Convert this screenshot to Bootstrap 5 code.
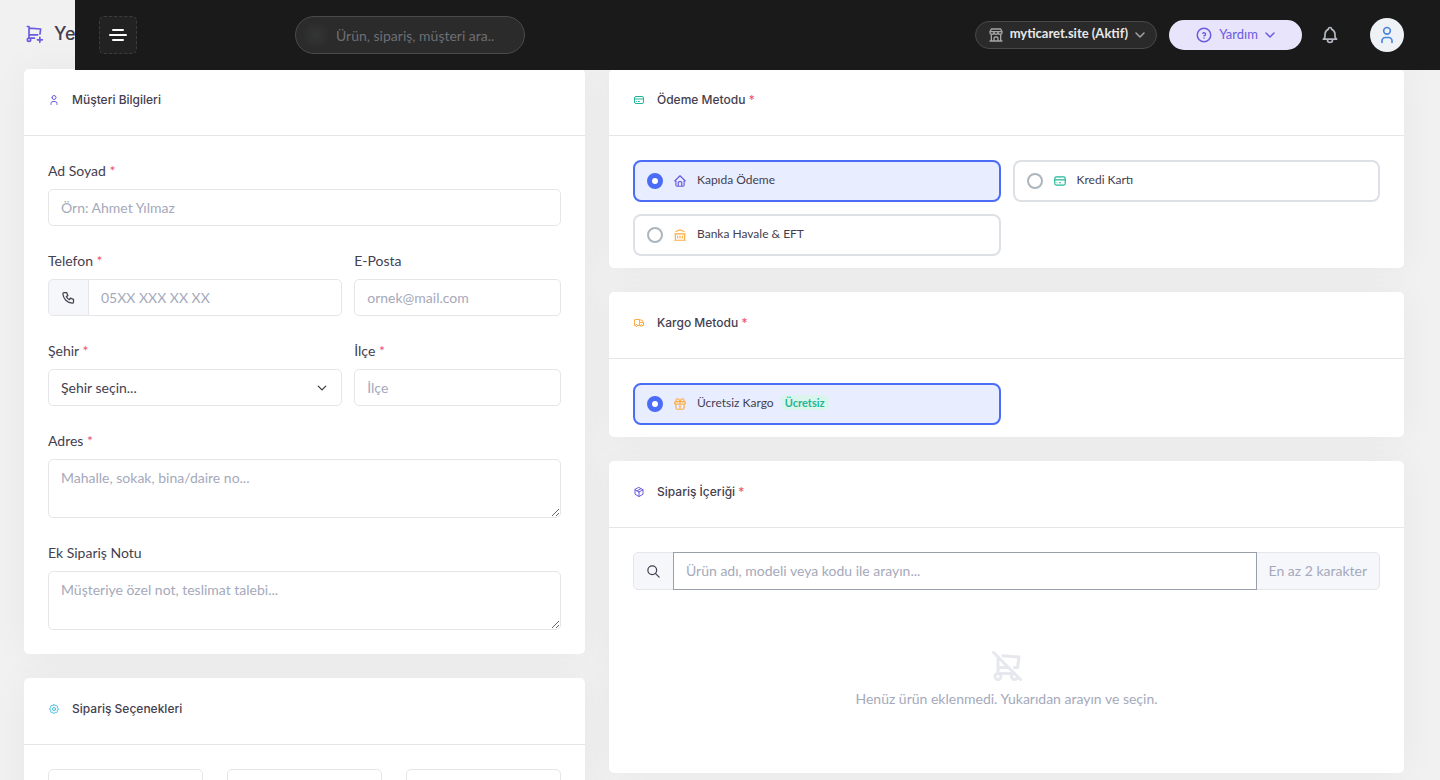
<!DOCTYPE html>
<html lang="tr">
<head>
<meta charset="utf-8">
<meta name="viewport" content="width=device-width, initial-scale=1">
<title>Yeni Sipariş</title>
<link href="https://cdn.jsdelivr.net/npm/bootstrap@5.3.0/dist/css/bootstrap.min.css" rel="stylesheet">
<style>
:root{--ink:#444050;--hint:#a5a9bb;--line:#e6e6e8;--violet:#6a5be0;--blue:#4a6cf7}
body{font-family:Lato,"Noto Sans",sans-serif;font-size:14px;line-height:21px;color:var(--ink);background:#f1f1f1}
.ic{width:12px;height:12px;flex:none;fill:none;stroke:currentColor;stroke-width:2;stroke-linecap:round;stroke-linejoin:round}
.ic-14{width:14px;height:14px}.ic-15{width:15px;height:15px}.ic-16{width:16px;height:16px}.ic-18{width:18px;height:18px}.ic-20{width:20px;height:20px}.ic-36{width:36px;height:36px}
.violet{color:var(--violet)}.teal{color:#20b799}.amber{color:#fdac41}.sky{color:#45bde0}.req{color:#f0506e;font-weight:400}
.heading-font{font-family:Inter,sans-serif}

.topbar{left:75px;height:70px;background:#1a1a1a;padding:0 36px 0 24px;z-index:1030}
.menu-toggle{width:38px;height:38px;border:1px dashed #3c3c3c;border-radius:5px;background:#222;color:#fff}
.top-search{margin-left:158px;width:230px;height:38px;border:1px solid #4a4a4a;background:radial-gradient(circle at 20px 18px,#343635 0,#2b2b2b 14px)}
.top-search input{padding:0 12px 0 40px;color:#ddd;font-size:14px}
.top-search input::placeholder{color:#6d6f75}
.store-btn{height:28px;padding:0 10px 0 12px;border:1px solid #484848;background:#2a2a2a;color:#a5a5a5;gap:6px}
.store-btn span{color:#e8e8e8;font-weight:700;font-size:13px;padding-bottom:2px}
.help-btn{width:133px;height:30px;background:#e8e4fb;font-size:13px;gap:6px;border:0}
.bell-btn{width:20px;height:20px;margin:0 30px 0 18px;color:#b4b8c0}
.avatar{width:34px;height:34px;background:#eef1f6;color:#4a86dc}

.page{padding:0 36px 24px 24px}
.page-title{height:69px;padding-bottom:2px;gap:10px}
.page-title h1{font-size:18px;line-height:24px;font-weight:500}
.panel{border:0;border-radius:5px;background:#fff;box-shadow:0 0 40px rgba(0,0,0,.045)}
.panel .card-header{height:67px;padding:0 24px 4px;background:transparent;border-bottom:1px solid var(--line);gap:12px}
.panel .card-header h2{font-size:12px;line-height:18px;font-weight:500}
.panel .card-body{padding:24px}
.panel .card-body.tight{padding-bottom:12px}

.form-label{line-height:21px;margin-bottom:8px;display:block}
.form-control,.form-select,.input-group-text{border-color:var(--line);font-size:14px;line-height:21px;color:var(--ink);border-radius:5px;padding:7px 12px;background-color:#fff}
input.form-control,.form-select{height:37px}
.form-select{padding-right:36px;background-size:10px 10px;background-position:right 14px center}
.form-control::placeholder,.hint{color:var(--hint)}
.input-group-text{background:#f6f7fb}
.input-group-text.hint{color:var(--hint)}
textarea.form-control{height:59px}
.fields{row-gap:24px;--bs-gutter-x:12px}
.options{--bs-gutter-x:12px;row-gap:12px}
.option{height:42px;padding:0 12px;border:2px solid #dde0e5;border-radius:8px;gap:10px;font-size:12px;line-height:18px;cursor:pointer}
.option input{appearance:none;width:16px;height:16px;margin:0;border:2px solid #adb5bd;border-radius:50%;background:#fff;flex:none}
.option input:checked{border:5px solid var(--blue)}
.option:has(input:checked){border-color:var(--blue);background:#e8eeff}
.option-name{padding-bottom:2px}
.free-badge{background:#dcf5ec;color:#20b799;font-size:11px;line-height:15px;padding:0 4px;border-radius:4px}
.product-search .form-control,.product-search .input-group-text{height:38px}
.product-search .form-control{border-color:#98a0ab;padding-bottom:9px}
.product-search .hint{padding-bottom:9px}
.empty{padding:58px 0 36px;color:var(--hint)}
.empty .ic{color:#e6e8ee}
</style>
</head>
<body>
<svg class="d-none" aria-hidden="true">
  <symbol id="cart-plus" viewBox="0 0 24 24"><path d="M4 19a2 2 0 1 0 4 0a2 2 0 0 0-4 0M12.500 17h-6.500v-14h-2M6 5l14 1l-.86 6.017m-2.640 .983h-10.500M16 19h6M19 16v6"/></symbol>
  <symbol id="cart-off" viewBox="0 0 24 24"><path d="M4 19a2 2 0 1 0 4 0a2 2 0 1 0-4 0M17 17a2 2 0 1 0 2 2M17 17h-11v-11M9.239 5.231l10.761 .769l-1 7h-2m-4 0h-7M3 3l18 18"/></symbol>
  <symbol id="user" viewBox="0 0 24 24"><path d="M8 7a4 4 0 1 0 8 0a4 4 0 0 0-8 0M6 21v-2a4 4 0 0 1 4-4h4a4 4 0 0 1 4 4v2"/></symbol>
  <symbol id="phone" viewBox="0 0 24 24"><path d="M5 4h4l2 5l-2.500 1.500a11 11 0 0 0 5 5l1.500-2.500l5 2v4a2 2 0 0 1-2 2a16 16 0 0 1-15-15a2 2 0 0 1 2-2"/></symbol>
  <symbol id="card-pay" viewBox="0 0 24 24"><rect x="3" y="5" width="18" height="14" rx="3"/><path d="M3 10h18M7 15h.01M11 15h2"/></symbol>
  <symbol id="home" viewBox="0 0 24 24"><path d="M5 12h-2l9-9l9 9h-2M5 12v7a2 2 0 0 0 2 2h10a2 2 0 0 0 2-2v-7M9 21v-6a2 2 0 0 1 2-2h2a2 2 0 0 1 2 2v6"/></symbol>
  <symbol id="bank" viewBox="0 0 24 24"><path d="M3 21h18M3 10h18M5 6l7-3l7 3M4 10v11M20 10v11M8 14v3M12 14v3M16 14v3"/></symbol>
  <symbol id="truck" viewBox="0 0 24 24"><circle cx="7" cy="17" r="2"/><circle cx="17" cy="17" r="2"/><path d="M5 17h-2v-11a1 1 0 0 1 1-1h9v12m-4 0h6m4 0h2v-6h-8m0-5h5l3 5"/></symbol>
  <symbol id="gift" viewBox="0 0 24 24"><rect x="3" y="8" width="18" height="4" rx="1"/><path d="M12 8v13M19 12v7a2 2 0 0 1-2 2h-10a2 2 0 0 1-2-2v-7M7.500 8a2.500 2.500 0 0 1 0-5a4.800 8 0 0 1 4.500 5a4.800 8 0 0 1 4.500-5a2.500 2.500 0 0 1 0 5"/></symbol>
  <symbol id="box" viewBox="0 0 24 24"><path d="M12 3l8 4.500v9l-8 4.500l-8-4.500v-9zM12 12l8-4.500M12 12v9M12 12l-8-4.500M16 5.250l-8 4.500"/></symbol>
  <symbol id="gear" viewBox="0 0 24 24"><path d="M10.325 4.317c.426-1.756 2.924-1.756 3.350 0a1.724 1.724 0 0 0 2.573 1.066c1.543-.94 3.310 .826 2.370 2.370a1.724 1.724 0 0 0 1.065 2.572c1.756 .426 1.756 2.924 0 3.350a1.724 1.724 0 0 0-1.066 2.573c.94 1.543-.826 3.310-2.370 2.370a1.724 1.724 0 0 0-2.572 1.065c-.426 1.756-2.924 1.756-3.350 0a1.724 1.724 0 0 0-2.573-1.066c-1.543 .94-3.310-.826-2.370-2.370a1.724 1.724 0 0 0-1.065-2.572c-1.756-.426-1.756-2.924 0-3.350a1.724 1.724 0 0 0 1.066-2.573c-.94-1.543 .826-3.310 2.370-2.370c1 .608 2.296 .07 2.572-1.065z"/><circle cx="12" cy="12" r="3"/></symbol>
  <symbol id="search" viewBox="0 0 24 24"><circle cx="10" cy="10" r="7"/><path d="M21 21l-6-6"/></symbol>
  <symbol id="bell" viewBox="0 0 24 24"><path d="M10 5a2 2 0 1 1 4 0a7 7 0 0 1 4 6v3a4 4 0 0 0 2 3h-16a4 4 0 0 0 2-3v-3a7 7 0 0 1 4-6M9 17v1a3 3 0 0 0 6 0v-1"/></symbol>
  <symbol id="store" viewBox="0 0 24 24"><path d="M3 21h18M3 7v1a3 3 0 0 0 6 0v-1m0 1a3 3 0 0 0 6 0v-1m0 1a3 3 0 0 0 6 0v-1h-18l2-4h14l2 4M5 21v-10.150M19 21v-10.150M9 21v-4a2 2 0 0 1 2-2h2a2 2 0 0 1 2 2v4"/></symbol>
  <symbol id="help" viewBox="0 0 24 24"><circle cx="12" cy="12" r="9"/><path d="M12 16v.01M12 13a2 2 0 0 0 .914-3.782a1.980 1.980 0 0 0-2.414 .483"/></symbol>
  <symbol id="chevron" viewBox="0 0 12 12"><path d="M2 4l4 4l4-4" stroke-width="1.500"/></symbol>
</svg>

<header class="topbar position-fixed top-0 end-0 d-flex align-items-center">
  <button class="menu-toggle btn p-0 d-flex align-items-center justify-content-center" type="button" aria-label="Menü"><svg class="ic ic-20" viewBox="0 0 20 20"><path d="M5 5h10M2 10h16M5 15h10"/></svg></button>
  <form class="top-search rounded-pill d-flex overflow-hidden" role="search">
    <input class="w-100 bg-transparent border-0" type="search" aria-label="Ara" placeholder="Ürün, sipariş, müşteri ara..">
  </form>
  <div class="d-flex align-items-center ms-auto">
    <button class="store-btn btn rounded-pill d-flex align-items-center me-2" type="button"><svg class="ic ic-16"><use href="#store"/></svg><span>myticaret.site (Aktif)</span><svg class="ic"><use href="#chevron"/></svg></button>
    <button class="help-btn btn rounded-pill violet d-flex align-items-center justify-content-center ms-1 p-0" type="button"><svg class="ic ic-18"><use href="#help"/></svg>Yardım<svg class="ic"><use href="#chevron"/></svg></button>
    <button class="bell-btn btn border-0 p-0 d-flex" type="button" aria-label="Bildirimler"><svg class="ic ic-20"><use href="#bell"/></svg></button>
    <a class="avatar rounded-circle d-flex align-items-center justify-content-center" href="#" aria-label="Profil"><svg class="ic ic-20"><use href="#user"/></svg></a>
  </div>
</header>

<main class="page">
  <div class="page-title d-flex align-items-center heading-font">
    <svg class="ic ic-20 violet"><use href="#cart-plus"/></svg>
    <h1 class="m-0">Yeni Sipariş</h1>
  </div>
  <div class="row gx-4">
    <div class="col-5 d-flex flex-column gap-4">
      <section class="card panel">
        <div class="card-header d-flex align-items-center"><svg class="ic violet"><use href="#user"/></svg><h2 class="heading-font m-0">Müşteri Bilgileri</h2></div>
        <div class="card-body">
          <div class="row fields">
            <div class="col-12"><label class="form-label" for="name">Ad Soyad <span class="req">*</span></label><input class="form-control" id="name" type="text" placeholder="Örn: Ahmet Yılmaz"></div>
            <div class="col-7"><label class="form-label" for="tel">Telefon <span class="req">*</span></label>
              <div class="input-group"><span class="input-group-text"><svg class="ic ic-15"><use href="#phone"/></svg></span><input class="form-control" id="tel" type="tel" placeholder="05XX XXX XX XX"></div></div>
            <div class="col-5"><label class="form-label" for="mail">E-Posta</label><input class="form-control" id="mail" type="email" placeholder="ornek@mail.com"></div>
            <div class="col-7"><label class="form-label" for="city">Şehir <span class="req">*</span></label><select class="form-select" id="city"><option>Şehir seçin...</option></select></div>
            <div class="col-5"><label class="form-label" for="district">İlçe <span class="req">*</span></label><input class="form-control" id="district" type="text" placeholder="İlçe"></div>
            <div class="col-12"><label class="form-label" for="address">Adres <span class="req">*</span></label><textarea class="form-control" id="address" placeholder="Mahalle, sokak, bina/daire no..."></textarea></div>
            <div class="col-12"><label class="form-label" for="note">Ek Sipariş Notu</label><textarea class="form-control" id="note" placeholder="Müşteriye özel not, teslimat talebi..."></textarea></div>
          </div>
        </div>
      </section>
      <section class="card panel">
        <div class="card-header d-flex align-items-center"><svg class="ic sky"><use href="#gear"/></svg><h2 class="heading-font m-0">Sipariş Seçenekleri</h2></div>
        <div class="card-body">
          <div class="row">
            <div class="col-4"><input class="form-control" type="text" aria-label="Seçenek 1"></div>
            <div class="col-4"><input class="form-control" type="text" aria-label="Seçenek 2"></div>
            <div class="col-4"><input class="form-control" type="text" aria-label="Seçenek 3"></div>
          </div>
        </div>
      </section>
    </div>

    <div class="col-7 d-flex flex-column gap-4">
      <section class="card panel">
        <div class="card-header d-flex align-items-center"><svg class="ic teal"><use href="#card-pay"/></svg><h2 class="heading-font m-0">Ödeme Metodu <span class="req">*</span></h2></div>
        <div class="card-body tight">
          <div class="row options">
            <div class="col-6"><label class="option d-flex align-items-center"><input type="radio" name="pay" checked><svg class="ic ic-14 violet"><use href="#home"/></svg><span class="option-name">Kapıda Ödeme</span></label></div>
            <div class="col-6"><label class="option d-flex align-items-center"><input type="radio" name="pay"><svg class="ic ic-14 teal"><use href="#card-pay"/></svg><span class="option-name">Kredi Kartı</span></label></div>
            <div class="col-6"><label class="option d-flex align-items-center"><input type="radio" name="pay"><svg class="ic ic-14 amber"><use href="#bank"/></svg><span class="option-name">Banka Havale &amp; EFT</span></label></div>
          </div>
        </div>
      </section>
      <section class="card panel">
        <div class="card-header d-flex align-items-center"><svg class="ic amber"><use href="#truck"/></svg><h2 class="heading-font m-0">Kargo Metodu <span class="req">*</span></h2></div>
        <div class="card-body tight">
          <div class="row options">
            <div class="col-6"><label class="option d-flex align-items-center"><input type="radio" name="ship" checked><svg class="ic ic-14 amber"><use href="#gift"/></svg><span class="option-name">Ücretsiz Kargo <strong class="free-badge d-inline-block ms-1">Ücretsiz</strong></span></label></div>
          </div>
        </div>
      </section>
      <section class="card panel">
        <div class="card-header d-flex align-items-center"><svg class="ic violet"><use href="#box"/></svg><h2 class="heading-font m-0">Sipariş İçeriği <span class="req">*</span></h2></div>
        <div class="card-body">
          <div class="input-group product-search">
            <label class="input-group-text" for="product"><svg class="ic ic-15"><use href="#search"/></svg></label>
            <input class="form-control" id="product" type="text" placeholder="Ürün adı, modeli veya kodu ile arayın...">
            <span class="input-group-text hint">En az 2 karakter</span>
          </div>
          <div class="empty text-center">
            <svg class="ic ic-36"><use href="#cart-off"/></svg>
            <p class="mt-1 mb-0 pb-1">Henüz ürün eklenmedi. Yukarıdan arayın ve seçin.</p>
          </div>
        </div>
      </section>
    </div>
  </div>
</main>
<script src="https://cdn.jsdelivr.net/npm/bootstrap@5.3.0/dist/js/bootstrap.bundle.min.js"></script>
</body>
</html>
